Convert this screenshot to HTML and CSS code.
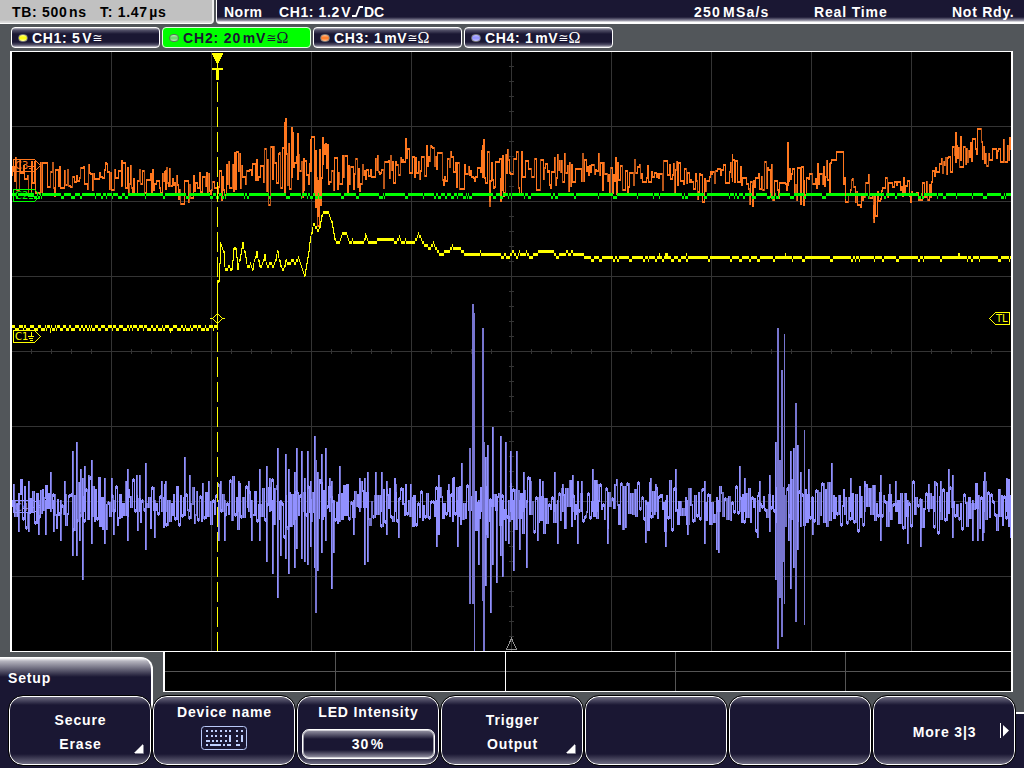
FILE: index.html
```html
<!DOCTYPE html>
<html lang="en">
<head>
<meta charset="utf-8">
<title>Oscilloscope</title>
<link rel="stylesheet" href="styles.css">
</head>
<body>
<div class="scope">
  <header class="topbar">
    <div class="timebase"><span class="tb">TB: <span class="qty">500 ns</span></span><span>T: <span class="qty">1.47 µs</span></span></div>
    <div class="status">
      <span class="mode">Norm</span>
      <span class="source">CH1: <span class="qty">1.2 V</span></span>
      <svg class="edge" width="13" height="14" viewBox="0 0 13 14"><path d="M1 11H5L8.500 2H12" fill="none" stroke="#fff" stroke-width="1.800"/></svg>
      <span class="coupling">DC</span>
      <span class="rate qty">250 MSa/s</span>
      <span class="acq">Real Time</span>
      <span class="ready">Not Rdy.</span>
    </div>
  </header>
  <nav class="channels">
    <div class="channel"><i class="led yellow"></i><span>CH1: <span class="qty">5 V</span></span><b class="sym">≅</b></div>
    <div class="channel active"><i class="led green"></i><span>CH2: <span class="qty">20 mV</span></span><b class="sym">≅</b><b class="ohm">Ω</b></div>
    <div class="channel"><i class="led orange"></i><span>CH3: <span class="qty">1 mV</span></span><b class="sym">≅</b><b class="ohm">Ω</b></div>
    <div class="channel"><i class="led violet"></i><span>CH4: <span class="qty">1 mV</span></span><b class="sym">≅</b><b class="ohm">Ω</b></div>
  </nav>
  <main class="plot">
    <svg width="999" height="599" viewBox="12 52 999 599" shape-rendering="crispEdges">
      <path id="grid" class="grid"/>
      <path id="orange-dark" fill="#b9571a"/><path id="orange" fill="#ff771e"/>
      <path id="green" fill="#00ff00"/>
      <path id="violet-dark" fill="#6f6fc2"/><path id="violet" fill="#9190ff"/>
      <path id="violet-peaks" fill="#7775cf"/>
      <path id="yellow" fill="#ffff00"/>
      <path class="cursor" d="M217.500 82V651"/>
      <path fill="#ff0" d="M212 53h11v2h-1v2h-1v2h-1v2h-1v2h-1v2h-1v-2h-1v-2h-1v-2h-1v-2h-1v-2h-1zM212 68h11v2h-4v10h-3v-10h-4zM217 64h1v4h-1z"/>
      <path class="mark yellow-line" d="M217.500 313.500l5 5l-5 5l-5-5zM210 318.500h3M222 318.500h3"/>
      <g class="mark yellow-line"><path d="M13.500 330.500h21l6 6l-6 6h-21zM28 336.500h6M29 338.500h4M31.500 332v4M30 340.500h3"/><text x="15" y="340">C1</text></g>
      <g class="mark green-line"><path d="M13.500 189.500h21l6 6l-6 6h-21zM28 196.500h6M29 198.500h4M31.500 192v4"/><text x="15" y="199">C2</text></g>
      <g class="mark orange-line"><path d="M13.500 159.500h21l6 6l-6 6h-21zM28 166.500h6M29 168.500h4M31.500 161v5"/><text x="15" y="169">C3</text></g>
      <g class="mark violet-line"><path d="M13.500 500.500h21l6 6l-6 6h-21zM28 507.500h6M29 509.500h4"/><text x="15" y="511">C4</text></g>
      <g class="mark yellow-line"><path d="M1009.500 312.500h-14l-6 6l6 6h14z"/><text x="996" y="322">TL</text></g>
      <path class="mark gray-line" d="M511.500 638.500l5 10.500h-10z"/>
    </svg>
  </main>
  <section class="bottom">
    <div class="tab">Setup</div>
    <div class="overview"><i class="mid"></i><i></i><i></i><i class="now"></i><i></i><i></i></div>
    <div class="keys">
      <div class="key"><span>Secure</span><span>Erase</span><svg class="corner" width="10" height="10" viewBox="0 0 10 10"><path d="M9.500 1v8.500H1" fill="none" stroke="#888796"/><path d="M9 0V9H0z" fill="#fff"/></svg></div>
      <div class="key upper"><span>Device name</span>
        <svg class="keyboard" width="46" height="24" viewBox="0 0 46 24"><rect x=".5" y=".5" width="45" height="23" rx="3" fill="none" stroke="#b9c9f8"/><path d="M5 4h2v2H5zM10 4h2v2h-2zM14 4h2v2h-2zM19 4h2v2h-2zM24 4h2v2h-2zM28 4h2v2h-2zM35 4h2v2h-2zM40 4h2v2h-2zM5 9h2v2H5zM10 9h2v2h-2zM14 9h2v2h-2zM19 9h2v2h-2zM24 9h2v2h-2zM28 9h2v7h-2zM35 9h2v2h-2zM40 9h2v7h-2zM5 14h4v2H5zM11 14h2v2h-2zM15 14h2v2h-2zM19 14h2v2h-2zM24 14h2v2h-2zM35 14h2v2h-2zM5 18h2v2H5zM9 18h11v2H9zM22 18h2v2h-2zM26 18h4v2h-4zM35 18h4v2h-4z" fill="#c0d1ff" shape-rendering="crispEdges"/></svg></div>
      <div class="key upper"><span>LED Intensity</span><div class="field"><span class="qty">30 %</span></div></div>
      <div class="key"><span>Trigger</span><span>Output</span><svg class="corner" width="10" height="10" viewBox="0 0 10 10"><path d="M9.500 1v8.500H1" fill="none" stroke="#888796"/><path d="M9 0V9H0z" fill="#fff"/></svg></div>
      <div class="key"></div>
      <div class="key"></div>
      <div class="key"><span>More 3|3</span><svg class="next" width="10" height="16" viewBox="0 0 10 16"><path d="M0 0h1v15H0zM3 2l6 5.500l-6 6z" fill="#fff"/></svg></div>
    </div>
  </section>
</div>
<script src="traces.js"></script>
</body>
</html>
```
FILE: styles.css
```css
* { box-sizing: border-box; }
body { margin: 0; background: #52565a; }
.scope {
  width: 1024px; height: 768px; overflow: hidden;
  display: flex; flex-direction: column;
  background: #52565a; color: #fff;
  font: bold 14px/16px "Liberation Sans", Arial, sans-serif;
  letter-spacing: .85px; white-space: nowrap;
}
.qty { word-spacing: -3px; }

.topbar { display: flex; gap: 2px; height: 24px; }
.timebase {
  width: 214px; padding: 4px 0 0 12px; display: flex;
  background: linear-gradient(#c1c1c1 0 20px, #ddd 22px);
  color: #000; border-right: 2px solid #eee; border-bottom: 1px solid #fff;
  border-bottom-right-radius: 4px; letter-spacing: .7px;
}
.tb { width: 88px; }
.status {
  flex: 1; display: flex; padding: 4px 0 0 7px;
  background: linear-gradient(#1a1733 0 17px, #5a5870 19px, #a8a6b3 21px, #fff 22px);
  border-left: 1px solid #fff; border-bottom-left-radius: 4px;
}
.mode { width: 55px; letter-spacing: .5px; }
.source { width: 72px; letter-spacing: .6px; }
.edge { margin-top: 1px; }
.coupling { width: 330px; letter-spacing: 0; }
.rate { width: 120px; letter-spacing: 1.2px; }
.acq { width: 138px; letter-spacing: .85px; }
.ready { letter-spacing: .75px; }

.channels { display: flex; gap: 2px; padding: 3px 0 3px 11px; height: 27px; }
.channel {
  width: 149px; height: 21px; padding: 0 0 0 6px; display: flex; align-items: center;
  border: 1px solid #fff; border-radius: 4px;
  background: linear-gradient(#bbbac4, #55536b 2px, #1a1733 6px 14px, #55536b 17px, #c5c4cc);
  letter-spacing: .7px;
}
.channel.active { background: #0f0; border-color: #e4ffe4; color: #1a1733; letter-spacing: .85px; }
.led { width: 10px; height: 8px; margin-right: 4px; border-radius: 4px; border: 1px solid #777; flex: none; }
.led.yellow { background: linear-gradient(#ffff80, #ff0, #ffffa0); }
.led.green { background: linear-gradient(#b6eab6, #62d462, #b6eab6); border-color: #567756; }
.led.orange { background: linear-gradient(#ffb988, #ff771e, #ffb988); }
.led.violet { background: linear-gradient(#b7b6ff, #9190ff, #c3c2ff); }
.sym { font: 12px/14px "DejaVu Sans", sans-serif; letter-spacing: 0; }
.ohm { font: 16px/16px "Liberation Serif", serif; letter-spacing: 0; }

.plot { width: 1003px; height: 601px; margin-left: 10px; background: #000; border: 1px solid #fff; border-width: 1px 2px; flex: none; }
.plot svg { display: block; }
.grid { stroke: #343434; fill: none; }
.cursor { stroke: #ff0; stroke-dasharray: 20 5; }
.mark { fill: none; }
.mark text { stroke: none; font: 10px "DejaVu Sans", sans-serif; letter-spacing: 0; }
.yellow-line { stroke: #ff0; } .yellow-line text { fill: #ff0; }
.green-line { stroke: #0f0; } .green-line text { fill: #0f0; }
.orange-line { stroke: #ff771e; } .orange-line text { fill: #ff771e; }
.violet-line { stroke: #9190ff; } .violet-line text { fill: #9190ff; }
.gray-line { stroke: #929292; }

.bottom {
  height: 116px; display: grid; grid-template: 40px 76px / 163px 1fr;
  background: linear-gradient(#52565a 60px, #fff 60px 62px, #1a1733 62px);
}
.tab {
  grid-area: 1 / 1 / 3 / 2; width: 153px; height: 57px; margin-top: 5px; padding: 12px 0 0 8px;
  border: solid #fff; border-width: 1px 2px 0 0; border-top-right-radius: 12px;
  background: linear-gradient(#fff, #b7b6c0 3px, #1a1733 19px);
}
.overview {
  grid-area: 1 / 2 / 2 / 3; width: 850px; height: 40px;
  border: solid #fff; border-width: 0 2px 1px; background: #000;
  display: grid; grid-template-columns: repeat(4, 170px) 166px; grid-template-rows: 19px 20px;
}
.overview i { grid-row: 1 / 3; border-right: 1px solid #555; }
.overview i:nth-child(2) { grid-column: 1; margin-right: -1px; }
.overview i:nth-child(3) { grid-column: 2; margin-right: -1px; }
.overview i:nth-child(4) { grid-column: 2; }
.overview i:nth-child(5) { grid-column: 3; margin-right: -1px; }
.overview i:nth-child(6) { grid-column: 4; margin-right: -1px; }
.overview .now { border-color: #fff; margin-right: -1px; }
.overview .mid { grid-area: 2 / 1 / 3 / 6; border: 0; border-top: 1px solid #555; }

.keys { grid-area: 2 / 1 / 3 / 3; display: flex; padding: 3px 0 0 8px; }
.key {
  position: relative; width: 144px; height: 71px; flex: none; padding: 2px 0 0 1px;
  display: flex; flex-direction: column; align-items: center; justify-content: center;
  line-height: 24px;
  border: 1px solid #000; border-radius: 15px;
  background: linear-gradient(#77758a, #1a1733 9px 58px, #77758a);
  box-shadow: inset 0 0 0 1px #fff;
}
.key.upper { justify-content: flex-start; padding-top: 8px; line-height: 16px; }
.keyboard { margin: 6px 2px 0 0; }
.field {
  width: 133px; height: 30px; margin: 9px 1px 0 0; padding-top: 6px; text-align: center;
  border: 1px solid #fff; border-radius: 7px;
  box-shadow: inset 0 0 0 1px rgba(255, 255, 255, .55);
  background: linear-gradient(#9c9aaa, #1a1733 9px 20px, #9c9aaa);
}
.corner { position: absolute; right: 7px; bottom: 11px; }
.next { position: absolute; right: 5px; top: 27px; }
```
FILE: traces.js
```js
// Small deterministic generator keeps the noise stable between loads.
let seed = 917;
const rnd = () => (seed = (seed * 16807) % 2147483647) / 2147483647;
const set = (id, d) => document.getElementById(id).setAttribute('d', d);
const bar = (x, a, b, w = 1) => `M${x} ${Math.round(a)}h${w}V${Math.round(b)}h-${w}z`;
const nums = s => s.trim().split(/\s+/).map(p => p.split(',').map(Number));

let g = '';
for (let x = 111; x < 1000; x += 100) g += `M${x + .5} 52V651`;
for (let y = 126; y < 600; y += 75) g += `M12 ${y + .5}H1011`;
for (let x = 31; x < 1010; x += 20) g += `M${x + .5} 349v5`;
for (let y = 66; y < 650; y += 15) g += `M509 ${y + .5}h5`;
set('grid', g);

function at(points, x) {
  let i = 1;
  while (i < points.length - 1 && points[i][0] < x) i++;
  const a = points[i - 1], b = points[i], t = Math.min(1, Math.max(0, (x - a[0]) / (b[0] - a[0])));
  return a.slice(1).map((v, k) => v + (b[k + 1] - v) * t);
}

// x, upper limit, lower limit
const orange = nums(`12,165,182 14,148,184 17,160,188 20,165,193 35,165,190 45,166,188 55,166,193 62,172,183 70,172,185
80,170,187 94,165,187 96,160,185 99,163,187 108,168,193 115,172,180 119,173,186 121,160,188 123,172,187 130,170,202 145,174,190 155,172,194
165,170,188 173,173,196 178,182,205 188,185,207 196,175,192 210,176,195 217,175,198 225,170,196 235,155,185 245,162,185 255,160,178
262,155,178 265,151,180 268,157,200 272,148,186 276,160,180 280,135,182 284,122,202 287,137,180 291,127,186 297,133,192 303,158,192 307,140,182
310,139,172 313,148,208 317,148,217 320,160,200 323,137,154 326,140,165 330,172,197 335,160,195 345,160,193 350,158,183
358,165,190 365,168,178 370,160,187 376,157,175 384,165,187 389,151,175 396,168,196 402,150,165 405,140,152 410,148,175
415,160,175 423,151,187 430,148,165 437,155,168 442,170,194 448,158,165 452,151,178 458,168,187 463,157,185 470,168,178
477,157,180 482,145,183 485,145,186 489,168,202 495,165,190 498,151,175 500,155,200 504,165,190 507,142,160 510,145,192 515,157,190
520,154,190 525,163,180 532,165,187 536,160,195 539,148,180 545,158,175 550,165,185 558,157,180 565,157,178 570,168,195
575,170,180 580,158,178 586,155,178 592,165,180 598,157,178 604,168,192 610,170,190 616,160,190 622,165,187 630,160,190
636,163,175 643,172,186 650,165,178 658,168,180 665,162,192 669,158,185 675,165,190 685,168,180 695,176,195 703,178,200
710,167,182 718,165,180 728,170,195 732,162,180 740,165,180 748,178,203 758,175,187 765,163,188 771,168,195 777,175,204
783,157,185 787,148,186 792,163,187 797,165,198 803,165,202 808,165,190 815,168,198 820,165,180 825,163,184 830,165,183
835,151,156 840,158,170 845,185,200 850,172,188 855,187,205 858,197,213 863,190,200 868,177,190 873,195,219 878,188,205
885,180,198 890,175,190 896,177,188 902,180,203 910,185,200 918,183,198 925,185,195 930,178,203 934,168,182 940,157,170
948,155,173 955,136,160 961,136,165 965,152,168 970,145,160 977,131,150 982,147,158 986,155,177 990,145,157 993,140,150
998,141,160 1005,143,160 1011,139,155`);
let hi = '', lo = '', prev = 175, rise = true;
for (let x = 12; x < 1011; x++) {
  const [a, b] = at(orange, x), c = (a + b) / 2, h = (b - a) / 2;
  let y = prev;
  if (rnd() < .66) {
    y = c + (rise ? -1 : 1) * h * (rnd() < .35 ? 1.25 : rnd() * .9);
    if (rnd() < .8) rise = !rise;
  }
  const s = bar(x, Math.min(prev, y) - 1, Math.max(prev, y) + 1);
  if (Math.abs(y - prev) > 7 && rnd() < .3) lo += s; else hi += s;
  prev = y;
}
for (const [x, a, b] of nums('121,160,186 165,170,190 272,148,180 284,122,186 291,127,178 297,133,180 303,158,191 310,139,172 315,150,208 317,180,217 322,137,165 482,145,178 489,180,202 500,178,202 732,154,182 752,185,207 787,148,186 803,180,206 829,163,193 873,205,219 955,136,163 960,136,161')) hi += bar(x, a, b, x === 284 || x === 732 ? 1 : 2);
set('orange', hi); set('orange-dark', lo);

let d = '';
for (let x = 12, solid = false; x < 1011;) {
  if (rnd() < .12) solid = !solid;
  const n = Math.min(1011 - x, 1 + Math.floor(rnd() * (solid ? 22 : 5)));
  const m = 1 + Math.floor(rnd() * 3.4);
  d += `M${x} 193h${n}v3h-${n}z`;
  x += n;
  if (x + m < 1011) d += `M${x} 196h${m}v3h-${m}z`;
  x += m;
}
set('green', d);

const yellow = nums(`217,330 218,280 219,262 220,243 223,252 224,267 226,270 229,266 231,270 233,248 235,248 237,268
239,260 242,242 245,257 247,267 250,264 252,268 256,252 259,266 261,267 264,255 267,266 270,262 273,266 277,251 280,265
283,270 285,260 289,264 292,259 295,263 298,257 301,267 304,275 307,258 310,236 313,224 315,226 318,231 321,215 323,212
328,212 331,222 334,238 337,243 339,243 342,233 346,233 349,243 352,240 355,243 363,243 365,234 368,243 375,243 377,240
393,240 395,243 399,236 402,243 405,240 407,243 411,242 415,240 418,233 423,243 429,248 433,242 437,251 441,254 445,251
449,251 452,246 454,249 460,249 464,253 479,254 480,252 482,254 500,254 502,257 504,254 508,257 512,251 515,254 517,257
519,252 522,254 526,252 530,257 534,254 540,251 553,251 557,257 560,254 564,254 567,251 569,254 572,251 574,254 583,254
585,257 1011,257`);
d = '';
for (let x = 12; x < 217;) {
  const n = 1 + Math.floor(rnd() * 4);
  const m = 1 + Math.floor(rnd() * 4);
  d += bar(x, 325, 328, Math.min(n, 217 - x)); x += n;
  if (x < 217) d += bar(x, 328, 331, Math.min(m, 217 - x));
  x += m;
}
d += bar(50, 330, 333) + bar(170, 330, 333) + bar(217, 280, 330);
prev = 282;
for (let x = 218; x < 585; x++) {
  const y = 212 + Math.round((at(yellow, x)[0] - 212) / 3) * 3;
  d += Math.abs(prev - y) > 3 ? bar(x, Math.min(prev, y), Math.max(prev, y) + 1) : bar(x, y - 1, y + 2);
  prev = y;
}
for (let x = 585; x < 1011;) {
  const n = Math.min(1011 - x, 2 + Math.floor(rnd() * rnd() * 34)), m = 1 + Math.floor(rnd() * 3);
  d += bar(x, 256, 259, n); x += n;
  if (x + m < 1011) d += bar(x, 259, 262, m);
  x += m;
}
d += bar(659, 253, 256) + bar(665, 253, 256, 3) + bar(686, 253, 256) + bar(785, 253, 256) + bar(958, 253, 256, 2);
set('yellow', d);

// x, top, bottom; a zero leaves that side to the noise floor
const spikes = nums(`13,484,0 18,0,532 28,481,532 38,0,535 45,0,535 50,472,0 53,0,532 60,0,541 64,481,0 72,451,556 76,442,556
79,0,541 80,469,0 82,478,580 84,466,0 88,475,0 91,460,544 104,478,544 111,478,0 113,0,535 127,469,541 136,475,0 139,475,0
145,463,550 154,0,538 161,481,0 165,481,0 184,457,0 189,475,0 208,481,0 218,0,541 224,0,541 220,481,0 238,481,0 248,481,0
251,0,541 259,469,541 266,466,562 269,478,0 272,0,574 277,448,598 280,0,556 285,454,559 288,469,574 294,472,568
296,448,549 301,451,559 304,478,562 307,451,565 310,481,547 314,436,568 315,460,613 317,472,571 321,454,553 325,448,541
329,478,0 331,481,589 333,0,553 339,466,0 353,0,535 359,478,0 364,478,565 367,472,562 375,472,0 381,472,0 386,481,535
395,484,0 398,0,538 410,484,0 436,0,547 438,475,0 448,484,0 452,478,0 457,0,547 461,463,0 469,448,604 473,304,651
475,313,651 478,0,565 482,328,601 483,442,651 485,457,586 487,445,538 490,0,613 492,427,565 496,0,583 500,436,556
502,0,577 505,442,541 508,0,544 510,451,0 513,0,571 516,451,0 519,0,550 523,472,0 526,0,568 530,481,0 537,0,541
542,481,0 554,472,0 557,0,544 562,484,0 572,475,0 577,0,544 581,481,0 592,469,0 597,484,0 607,0,544 645,0,543
650,478,0 655,484,0 665,0,547 675,469,0 687,0,535 704,481,544 716,0,550 718,0,553 739,466,0 744,478,0 757,0,538
759,481,0 769,475,532 775,442,580 777,328,649 781,370,637 784,334,604 788,484,541 790,451,589 793,448,568 795,403,622
797,445,550 800,472,0 804,430,625 808,469,0 812,0,535 831,463,0 850,478,0 864,481,0 880,475,541 889,484,0 895,481,0
907,0,544 920,0,547 928,484,0 934,481,0 940,481,0 948,469,0 952,475,538 972,0,541 977,0,541 982,0,541 984,472,0
1006,478,0 1010,0,538`);
hi = lo = ''; prev = 506;
let up = true;
for (let x = 12; x < 1011;) {
  const amp = (x > 260 && x < 340) || (x > 468 && x < 525) || (x > 772 && x < 808) ? 34 : 28;
  const r = rnd();
  const y = 506 + (up ? -1 : 1) * amp * (r < .2 ? r : .15 + .85 * rnd() * r + .1);
  if (rnd() < .88) up = !up;
  const s = bar(x, Math.min(prev, y) - 1, Math.max(prev, y) + 1);
  if (rnd() < .15) lo += s; else hi += s;
  x++;
  const q = rnd();
  if (q < .3) {
    const t = bar(x, Math.min(prev, y) - 1, Math.max(prev, y) + 1);
    if (rnd() < .6) lo += t; else hi += t;
    x++;
  } else if (q < .62) {
    hi += bar(x, y - 2, y + 2);
    x++;
  }
  prev = y;
}
let tall = '';
for (const [x, a, b] of spikes) {
  const top = a || 500, bottom = b || 512;
  if (x === 473) tall += bar(472, 304, 604, 2) + bar(474, 313, 651);
  else if (x === 475) continue;
  else if (bottom - top > 150) tall += bar(x, top, bottom, x === 784 || x === 804 ? 1 : 2);
  else { hi += bar(x, top, bottom); lo += bar(x + 1, top, bottom); }
}
tall += bar(779, 460, 598, 2) + bar(783, 487, 562, 2);
set('violet', hi); set('violet-dark', lo); set('violet-peaks', tall);
```
